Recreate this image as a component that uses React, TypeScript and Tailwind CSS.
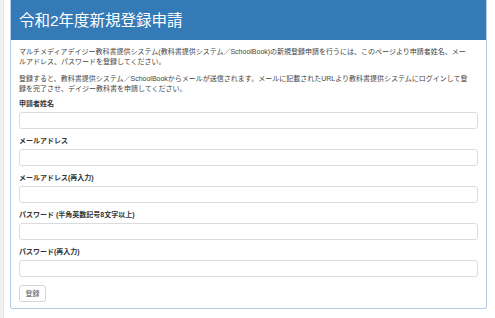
import React from "react";

const fields: string[] = [
  "申請者姓名",
  "メールアドレス",
  "メールアドレス(再入力)",
  "パスワード (半角英数記号8文字以上)",
  "パスワード(再入力)",
];

const App = () => {
  return (
    <div className="flex h-[318px] w-[495px] overflow-hidden bg-white font-['Liberation_Sans','Noto_Sans_CJK_JP',sans-serif]">
      {/* left edge of the outer page */}
      <div className="h-full w-[4px] border-r border-[#e3e3e3] bg-[#f1f1f1]" />

      {/* panel */}
      <div className="ml-[6px] w-[477px] self-start rounded-b-[3px] border border-t-0 border-[#b3cde8]">
        <div className="flex h-[40px] items-center bg-[#337ab7] px-[8px] pt-[1px]">
          <h1 className="text-[15.5px] leading-none font-normal text-white">令和2年度新規登録申請</h1>
        </div>

        <div className="px-[8px] pt-[7px] pb-[6px] text-[#444]">
          <p className="mb-[7px] text-[7px] leading-[10px]">
            マルチメディアデイジー教科書提供システム(教科書提供システム／SchoolBook)の新規登録申請を行うには、このページより申請者姓名、メー
            <br />
            ルアドレス、パスワードを登録してください。
          </p>
          <p className="mb-[5px] text-[7px] leading-[10px]">
            登録すると、教科書提供システム／SchoolBookからメールが送信されます。メールに記載されたURLより教科書提供システムにログインして登
            <br />
            録を完了させ、デイジー教科書を申請してください。
          </p>

          {fields.map((label) => (
            <div key={label} className="mb-[7px]">
              <label className="mb-[3px] block text-[7px] leading-[10px] font-bold text-[#333]">{label}</label>
              <input
                type="text"
                className="block h-[17px] w-full rounded-[3px] border border-[#dcdcdc] bg-white outline-none"
              />
            </div>
          ))}

          <div className="pt-[1px]">
            <button className="flex h-[17px] w-[27px] items-center justify-center rounded-[3px] border border-[#d4d4d4] bg-white text-[7px] leading-none text-[#555]">
              登録
            </button>
          </div>
        </div>
      </div>
    </div>
  );
};

export default App;
